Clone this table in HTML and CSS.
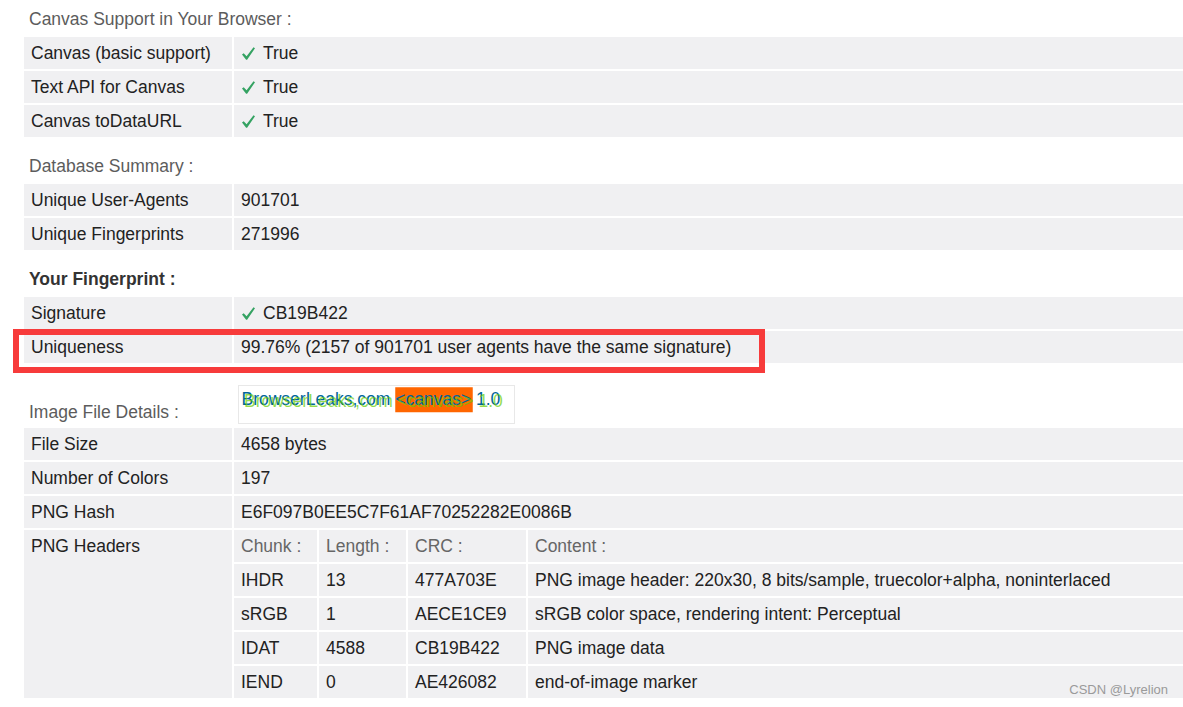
FILE: index.html
```html
<!DOCTYPE html>
<html>
<head>
<meta charset="utf-8">
<title>Canvas Fingerprint</title>
<link rel="stylesheet" href="styles.css">
</head>
<body>
<div class="page">
  <div class="section-title">Canvas Support in Your Browser :</div>
  <div class="grid">
    <div class="cell">Canvas (basic support)</div>
    <div class="cell"><svg class="check" viewBox="0 0 15 15"><path d="M1 8.4 L2.7 7.3 L5.6 10.3 L12.5 1.3 L14 2.3 L6.1 13.8 L5.1 13.8 Z"/></svg>True</div>
    <div class="cell">Text API for Canvas</div>
    <div class="cell"><svg class="check" viewBox="0 0 15 15"><path d="M1 8.4 L2.7 7.3 L5.6 10.3 L12.5 1.3 L14 2.3 L6.1 13.8 L5.1 13.8 Z"/></svg>True</div>
    <div class="cell">Canvas toDataURL</div>
    <div class="cell"><svg class="check" viewBox="0 0 15 15"><path d="M1 8.4 L2.7 7.3 L5.6 10.3 L12.5 1.3 L14 2.3 L6.1 13.8 L5.1 13.8 Z"/></svg>True</div>
  </div>

  <div class="section-title">Database Summary :</div>
  <div class="grid">
    <div class="cell">Unique User-Agents</div>
    <div class="cell">901701</div>
    <div class="cell">Unique Fingerprints</div>
    <div class="cell">271996</div>
  </div>

  <div class="section-title strong">Your Fingerprint :</div>
  <div class="grid marked">
    <div class="cell">Signature</div>
    <div class="cell"><svg class="check" viewBox="0 0 15 15"><path d="M1 8.4 L2.7 7.3 L5.6 10.3 L12.5 1.3 L14 2.3 L6.1 13.8 L5.1 13.8 Z"/></svg>CB19B422</div>
    <div class="cell">Uniqueness</div>
    <div class="cell">99.76% (2157 of 901701 user agents have the same signature)</div>
    <div class="highlight"></div>
  </div>

  <div class="image-row">
    <div class="image-label">Image File Details :</div>
    <div class="canvas-box">
      <svg class="canvas-img" viewBox="0 0 220 30">
        <rect x="125" y="1" width="62" height="20" fill="#ff6600"/>
        <text x="2" y="15" class="cv-text" fill="#006699">BrowserLeaks,com &lt;canvas&gt; 1.0</text>
        <text x="4" y="17" class="cv-text" fill="rgba(102,204,0,0.7)">BrowserLeaks,com &lt;canvas&gt; 1.0</text>
      </svg>
    </div>
  </div>
  <div class="grid">
    <div class="cell">File Size</div>
    <div class="cell">4658 bytes</div>
    <div class="cell">Number of Colors</div>
    <div class="cell">197</div>
    <div class="cell">PNG Hash</div>
    <div class="cell">E6F097B0EE5C7F61AF70252282E0086B</div>
    <div class="cell">PNG Headers</div>
    <div class="cell nested">
      <div class="chunks">
        <div class="cell head">Chunk :</div>
        <div class="cell head">Length :</div>
        <div class="cell head">CRC :</div>
        <div class="cell head">Content :</div>

        <div class="cell">IHDR</div>
        <div class="cell">13</div>
        <div class="cell">477A703E</div>
        <div class="cell">PNG image header: 220x30, 8 bits/sample, truecolor+alpha, noninterlaced</div>

        <div class="cell">sRGB</div>
        <div class="cell">1</div>
        <div class="cell">AECE1CE9</div>
        <div class="cell">sRGB color space, rendering intent: Perceptual</div>

        <div class="cell">IDAT</div>
        <div class="cell">4588</div>
        <div class="cell">CB19B422</div>
        <div class="cell">PNG image data</div>

        <div class="cell">IEND</div>
        <div class="cell">0</div>
        <div class="cell">AE426082</div>
        <div class="cell">end-of-image marker</div>
      </div>
    </div>
  </div>
</div>
<div class="watermark">CSDN @Lyrelion</div>
</body>
</html>
```

FILE: styles.css
```css
html, body {
  margin: 0;
  padding: 0;
  background: #ffffff;
}

body {
  font-family: "Liberation Sans", Arial, sans-serif;
  font-size: 17.5px;
  color: #222222;
  position: relative;
  width: 1183px;
  height: 707px;
  overflow: hidden;
}

.page {
  padding-left: 24px;
  width: 1159px;
}

.section-title {
  height: 37px;
  box-sizing: border-box;
  padding-top: 2px;
  display: flex;
  align-items: center;
  padding-left: 5px;
  color: #5c5c5c;
}

.grid + .section-title {
  margin-top: 10px;
}

.section-title.strong {
  font-weight: bold;
  color: #333333;
}

.grid {
  display: grid;
  grid-template-columns: 208px 1fr;
  gap: 2px;
  position: relative;
}

.cell {
  background: #f0f0f2;
  line-height: 32px;
  min-height: 32px;
  padding: 0 7px;
  white-space: nowrap;
}

.check {
  width: 15px;
  height: 15px;
  vertical-align: -2px;
  margin-right: 7px;
}

.check path {
  fill: #34a262;
}

.highlight {
  position: absolute;
  left: -11px;
  top: 32px;
  width: 752px;
  height: 44px;
  box-sizing: border-box;
  border: 6px solid #f73b3b;
  pointer-events: none;
}

.image-row {
  display: flex;
  align-items: flex-end;
  margin-top: 10px;
  height: 55px;
  box-sizing: border-box;
  padding-bottom: 4px;
}

.image-label {
  width: 209px;
  padding-left: 5px;
  margin-bottom: 2px;
  line-height: 20px;
  color: #5c5c5c;
}

.canvas-box {
  border: 1px solid #e8e8e8;
  background: #ffffff;
  height: 37.5px;
  width: 275px;
}

.canvas-img {
  display: block;
  width: 275px;
  height: 37.5px;
}

.cv-text {
  font-family: "Liberation Sans", Arial, sans-serif;
  font-size: 14px;
}

.cell.nested {
  padding: 0;
  background: transparent;
}

.chunks {
  display: grid;
  grid-template-columns: 83px 87px 118px 1fr;
  gap: 2px;
}

.cell.head {
  color: #666666;
}

.watermark {
  position: absolute;
  right: 15px;
  top: 682px;
  font-size: 13px;
  line-height: 16px;
  color: #9a9a9a;
}
```
